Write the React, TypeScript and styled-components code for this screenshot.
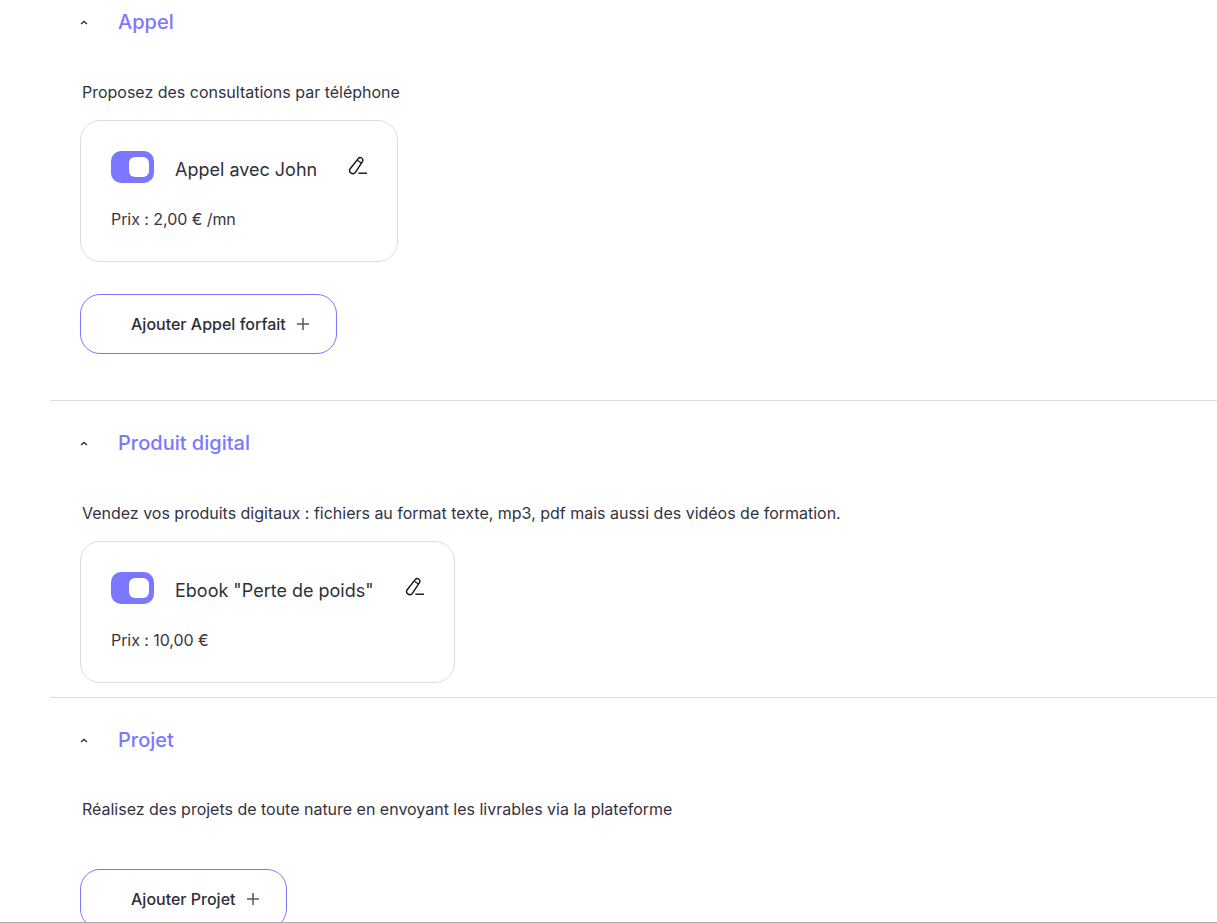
import React, { FC } from "react";
import styled, { createGlobalStyle } from "styled-components";

const GlobalStyle = createGlobalStyle`
	html, body {
		margin: 0;
		padding: 0;
		background: #ffffff;
		overflow: hidden;
		font-family: "Inter", "Liberation Sans", sans-serif;
	}
`;

type OfferProps = {
	title: string;
	price: string;
};

type SectionProps = {
	title: string;
	description: string;
	offers?: OfferProps[];
	addLabel?: string;
	first?: boolean;
	last?: boolean;
};

const Chevron = () => (
	<svg width="8" height="5" viewBox="0 0 8 5" fill="none">
		<path d="M1 4 L4 1.4 L7 4" stroke="#2f2f3a" strokeWidth="1.3" />
	</svg>
);

const PenIcon = () => (
	<svg width="20" height="20" viewBox="0 0 20 20" fill="none">
		<path
			d="M10.2 2.6 a2.6 2.6 0 0 1 4.4 2.7 L7.4 16.4 a3.2 3.2 0 0 1 -5.4 -3.4 Z"
			stroke="#111"
			strokeWidth="1.4"
			strokeLinejoin="round"
		/>
		<path d="M9.2 4.2 L13.6 7" stroke="#111" strokeWidth="1.1" />
		<path d="M10.4 17.2 H19" stroke="#111" strokeWidth="1.4" />
	</svg>
);

const PlusIcon = () => (
	<svg width="12" height="12" viewBox="0 0 12 12" fill="none">
		<path d="M6 0 V12 M0 6 H12" stroke="#55556a" strokeWidth="1.5" />
	</svg>
);

const Offer: FC<OfferProps> = ({ title, price }) => (
	<Card>
		<CardTop>
			<Toggle>
				<Knob />
			</Toggle>
			<CardTitle>{title}</CardTitle>
			<EditButton>
				<PenIcon />
			</EditButton>
		</CardTop>
		<Price>{price}</Price>
	</Card>
);

const Section: FC<SectionProps> = ({ title, description, offers = [], addLabel, first, last }) => (
	<SectionWrapper $first={first} $last={last} $hasAdd={!!addLabel}>
		<SectionHeader>
			<ChevronSlot>
				<Chevron />
			</ChevronSlot>
			<SectionTitle>{title}</SectionTitle>
		</SectionHeader>
		<Description $tight={offers.length === 0}>{description}</Description>
		<Cards>
			{offers.map((offer) => (
				<Offer key={offer.title} {...offer} />
			))}
		</Cards>
		{addLabel && (
			<AddButton>
				{addLabel}
				<PlusIcon />
			</AddButton>
		)}
	</SectionWrapper>
);

export default function App() {
	return (
		<Page>
			<GlobalStyle />
			<Section
				first
				title="Appel"
				description="Proposez des consultations par téléphone"
				offers={[{ title: "Appel avec John", price: "Prix : 2,00 € /mn" }]}
				addLabel="Ajouter Appel forfait"
			/>
			<Section
				title="Produit digital"
				description="Vendez vos produits digitaux : fichiers au format texte, mp3, pdf mais aussi des vidéos de formation."
				offers={[{ title: 'Ebook "Perte de poids"', price: "Prix : 10,00 €" }]}
			/>
			<Section
				last
				title="Projet"
				description="Réalisez des projets de toute nature en envoyant les livrables via la plateforme"
				addLabel="Ajouter Projet"
			/>
		</Page>
	);
}

const Page = styled.div`
	height: 923px;
	box-sizing: border-box;
	border-bottom: 1px solid #a9a9ad;
	overflow: hidden;
	padding-left: 50px;
	color: #2f2f3a;
`;

const SectionWrapper = styled.section<{ $first?: boolean; $last?: boolean; $hasAdd?: boolean }>`
	padding-top: ${(props) => (props.$first ? "0" : "20px")};
	padding-bottom: ${(props) => (props.$hasAdd ? "46px" : "14px")};
	border-bottom: ${(props) => (props.$last ? "none" : "1px solid #dcdce3")};
`;

const SectionHeader = styled.div`
	display: flex;
	align-items: center;
	height: 44px;
`;

const ChevronSlot = styled.div`
	width: 68px;
	padding-left: 30px;
	box-sizing: border-box;
	display: flex;
	align-items: center;
`;

const SectionTitle = styled.h2`
	margin: 0;
	font-size: 20px;
	font-weight: 500;
	color: #7b78ff;
	line-height: 44px;
`;

const Description = styled.p<{ $tight?: boolean }>`
	margin: ${(props) => (props.$tight ? "36px" : "37px")} 0 0 32px;
	font-size: 16px;
	line-height: 22px;
	letter-spacing: -0.01px;
	color: #33333f;
`;

const Cards = styled.div`
	display: flex;
	margin: 17px 0 0 30px;
`;

const Card = styled.div`
	box-sizing: border-box;
	height: 142px;
	padding: 30px 29px 0 30px;
	border: 1px solid #dcdce3;
	border-radius: 20px;
	background: #fff;
`;

const CardTop = styled.div`
	display: flex;
	align-items: center;
	height: 32px;
`;

const Toggle = styled.div`
	box-sizing: border-box;
	width: 43px;
	height: 32px;
	padding: 6px 5px;
	border-radius: 10px;
	background: #7b78ff;
	display: flex;
	justify-content: flex-end;
`;

const Knob = styled.div`
	width: 20px;
	height: 20px;
	border-radius: 6px;
	background: #fff;
`;

const CardTitle = styled.div`
	margin-left: 21px;
	padding-top: 5px;
	font-size: 18px;
	font-weight: 400;
	color: #2f2f3a;
	white-space: nowrap;
`;

const EditButton = styled.div`
	margin-left: 31px;
	width: 20px;
	height: 20px;
	margin-top: -2px;
`;

const Price = styled.div`
	margin-top: 25px;
	font-size: 16px;
	line-height: 22px;
	letter-spacing: -0.06px;
	color: #3a3640;
`;

const AddButton = styled.button`
	display: flex;
	align-items: center;
	gap: 11px;
	box-sizing: border-box;
	height: 60px;
	margin: 32px 0 0 30px;
	padding: 0 27px 1px 50px;
	background: #fff;
	border: 1px solid #7b78ff;
	border-radius: 20px;
	font-family: inherit;
	font-size: 16px;
	font-weight: 450;
	color: #2f2f3a;
`;
